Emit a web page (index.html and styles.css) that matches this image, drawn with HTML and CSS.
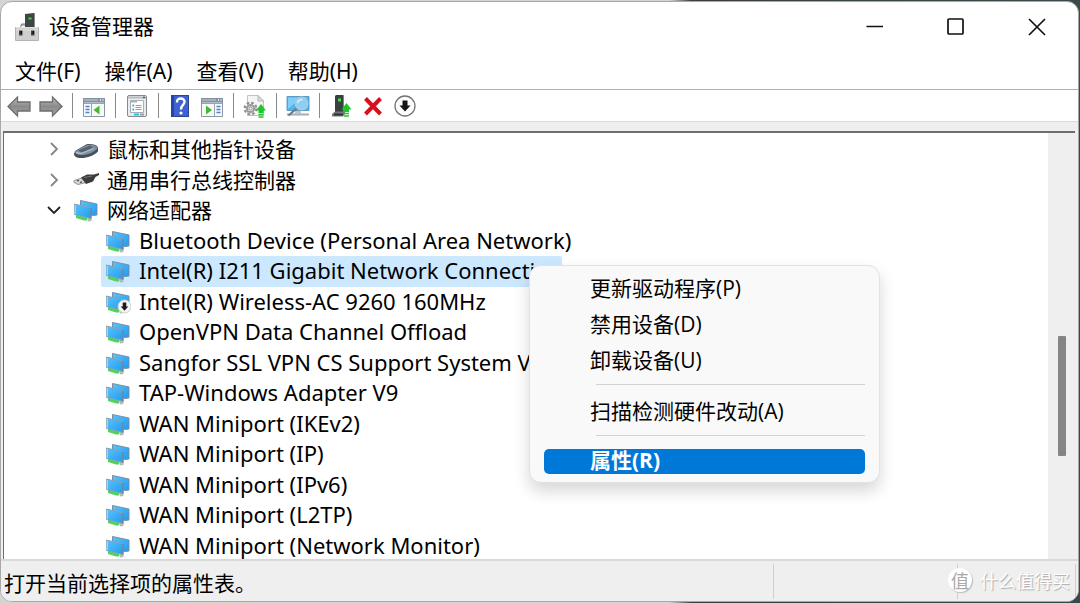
FILE: index.html
```html
<!DOCTYPE html>
<html lang="zh-CN">

  <head>
    <meta charset="utf-8">
    <title>设备管理器</title>
    <link rel="stylesheet" href="styles.css">
  </head>

  <body>

    <!-- shared icons -->
    <svg class="sprite" aria-hidden="true">
      <defs>
        <linearGradient id="screen" x1="0" y1="0" x2="1" y2="1">
          <stop offset="0" stop-color="#5cc3fb"/>
          <stop offset="1" stop-color="#1f9bf2"/>
        </linearGradient>
        <linearGradient id="steel" x1="0" y1="0" x2="0" y2="1">
          <stop offset="0" stop-color="#bdbdbd"/>
          <stop offset="0.5" stop-color="#8b8b8b"/>
          <stop offset="1" stop-color="#a5a5a5"/>
        </linearGradient>
      </defs>
      <symbol id="adapter" viewBox="0 0 26 24">
        <path d="M7.5 2.5 L24 6 V17 L20 17.5 L7.5 13Z" fill="url(#screen)" stroke="#7b8fa0"/>
        <path d="M3 16 L14 18.5 V22.5 L11 22.5 L3 20Z" fill="#4fd35c"/>
        <path d="M14 20 H18.5 V23 L15 23.5Z" fill="#b4b9bd"/>
        <path d="M1.5 6 L18 10 V20.5 L1.5 16.5Z" fill="url(#screen)" stroke="#8aa2b3"/>
        <path d="M2.2 7 V16" stroke="#b9e3f8"/>
        <path d="M18 10 V20.5" stroke="#66788a"/>
      </symbol>
      <symbol id="uparrow" viewBox="0 0 10 14">
        <path d="M5 0 L10 6.5 H7.5 V9 H2.5 V6.5 H0Z" fill="#22c32e"/>
        <path d="M2.5 10.5 H7.5 M2.5 13 H7.5" stroke="#22c32e" stroke-width="1.6"/>
      </symbol>
      <symbol id="chevron" viewBox="0 0 14 14">
        <path d="M4 1 L10 7 L4 13" fill="none" stroke="currentColor" stroke-width="1.8"/>
      </symbol>
    </svg>

    <div class="window">

      <header class="titlebar">
        <svg class="app-icon" viewBox="0 0 24 28" aria-hidden="true">
          <path d="M10 1 L19 0 L20 1 V14 H10Z" fill="#3f4446"/>
          <path d="M19 0 L20 1 V14 H19Z" fill="#85898b"/>
          <path d="M13.5 4.5 H16.5 V6.5 H13.5Z" fill="#35e04a"/>
          <path d="M6 12 H10 M5.5 14.5 L6.5 11 H10" fill="none" stroke="#777"/>
          <path d="M0.5 14.5 H23.5 V27.5 H0.5Z" fill="#cfcfcf" stroke="#b3b3b3"/>
          <path d="M1 14.5 H23 M1 17 H23" stroke="#e2e2e2"/>
          <path d="M4 17.5 H7.5 V22.5 H4Z M16 17.5 H19.5 V22.5 H16Z" fill="#454545"/>
          <path d="M5.5 18 H7 V21 H5.5Z M17.5 18 H19 V21 H17.5Z" fill="#111"/>
        </svg>
        <h1 class="title">设备管理器</h1>
        <div class="controls">
          <button class="control" aria-label="最小化">
            <svg viewBox="0 0 18 18"><path d="M0.5 8.5 H17"/></svg>
          </button>
          <button class="control" aria-label="最大化">
            <svg viewBox="0 0 18 18"><rect x="1" y="1" width="15" height="15" rx="1"/></svg>
          </button>
          <button class="control" aria-label="关闭">
            <svg viewBox="0 0 18 18"><path d="M1 1 L17 17 M17 1 L1 17"/></svg>
          </button>
        </div>
      </header>

      <nav class="menubar">
        <button>文件(F)</button>
        <button>操作(A)</button>
        <button>查看(V)</button>
        <button>帮助(H)</button>
      </nav>

      <div class="toolbar" role="toolbar">
        <button aria-label="后退">
          <svg viewBox="0 0 24 24"><path d="M1 12.5 L10.5 3 V8 H23 V17 H10.5 V22Z" fill="url(#steel)" stroke="#6d6d6d" stroke-width="1.3"/></svg>
        </button>
        <button aria-label="前进">
          <svg viewBox="0 0 24 24"><path d="M23 12.5 L13.5 3 V8 H1 V17 H13.5 V22Z" fill="url(#steel)" stroke="#6d6d6d" stroke-width="1.3"/></svg>
        </button>
        <span class="sep"></span>
        <button aria-label="显示控制台树">
          <svg viewBox="0 0 24 24">
            <path d="M1.5 4.5 H22.5 V22.5 H1.5Z" fill="#f7f8f9" stroke="#8b96a2"/>
            <path d="M1 4 H23 V10 H1Z" fill="#8592a1"/>
            <path d="M2 6 H16 M2 8.8 H22" stroke="#c5ced8"/>
            <path d="M18 6 H19 M20.5 6 H21.5" stroke="#fff" stroke-width="1.5"/>
            <path d="M9.5 10 V22" stroke="#9aa4ae"/>
            <path d="M3.5 12.5 H7.5 M3.5 15.5 H7.5 M3.5 18.5 H7.5" stroke="#4787c9" stroke-width="1.5"/>
            <path d="M17.5 11.5 V20.5 L11.5 16Z" fill="#43b832"/>
          </svg>
        </button>
        <span class="sep"></span>
        <button aria-label="属性">
          <svg viewBox="0 0 24 24">
            <rect x="2.5" y="1.5" width="19" height="21" rx="1.5" fill="#e9ebed" stroke="#858a8f"/>
            <path d="M3 3.5 H21" stroke="#b7bcc1" stroke-width="2"/>
            <path d="M18 3.5 H20" stroke="#555" stroke-width="1.5"/>
            <path d="M5.5 6.5 H18.5 V18.5 H5.5Z" fill="#fff" stroke="#a9afb6"/>
            <path d="M6 7.5 H12" stroke="#a9afb6" stroke-width="2"/>
            <path d="M7.5 11.5 H9 M7.5 15.5 H9" stroke="#28a4df" stroke-width="2"/>
            <path d="M10.5 11.5 H16.5 M10.5 13.5 H16.5 M10.5 15.5 H16.5" stroke="#969ca2"/>
            <path d="M9 20.5 H14" stroke="#28c4e6" stroke-width="2"/>
            <path d="M15 20.5 H19" stroke="#9aa0a6" stroke-width="2"/>
          </svg>
        </button>
        <span class="sep"></span>
        <button aria-label="帮助">
          <svg viewBox="0 0 24 24">
            <path d="M3 1 H21 V23 H3Z" fill="#3e62cf"/>
            <path d="M3 1 H6 V23 H3Z" fill="#2645a7"/>
            <path d="M3.5 1.5 H20.5 V22.5 H3.5Z" fill="none" stroke="#2c4496"/>
            <path d="M9 8.5 C8.5 3 17 3.5 16.5 8 C16.3 11 13 11 13 15.5" fill="none" stroke="#fff" stroke-width="2.4"/>
            <circle cx="13" cy="19" r="1.6" fill="#fff"/>
          </svg>
        </button>
        <button aria-label="显示操作窗格">
          <svg viewBox="0 0 24 24">
            <path d="M1.5 4.5 H22.5 V22.5 H1.5Z" fill="#f7f8f9" stroke="#8b96a2"/>
            <path d="M1 4 H23 V10 H1Z" fill="#8592a1"/>
            <path d="M2 6 H16 M2 8.8 H22" stroke="#c5ced8"/>
            <path d="M18 6 H19 M20.5 6 H21.5" stroke="#fff" stroke-width="1.5"/>
            <path d="M14.5 10 V22" stroke="#9aa4ae"/>
            <path d="M16.5 12.5 H20.5 M16.5 15.5 H20.5 M16.5 18.5 H20.5" stroke="#4787c9" stroke-width="1.5"/>
            <path d="M6 11.5 V20.5 L12 16Z" fill="#43b832"/>
          </svg>
        </button>
        <span class="sep"></span>
        <button aria-label="更新驱动程序">
          <svg viewBox="0 0 24 24">
            <path d="M4.5 1.5 H15 L20.5 7 V21.5 H4.5Z" fill="#f5f5f5" stroke="#c2c2c2"/>
            <path d="M15 1.5 V7 H20.5Z" fill="#ddd" stroke="#b5b5b5"/>
            <circle cx="7.5" cy="14.5" r="5.8" fill="none" stroke="#8f8f8f" stroke-width="2.2" stroke-dasharray="2.6 1.95"/>
            <circle cx="7.5" cy="14.5" r="3.6" fill="#e8e8e8" stroke="#9a9a9a" stroke-width="2"/>
            <circle cx="7.5" cy="14.5" r="1.5" fill="#fff" stroke="#888"/>
            <use href="#uparrow" x="12" y="10" width="12" height="14"/>
          </svg>
        </button>
        <span class="sep"></span>
        <button aria-label="扫描检测硬件改动">
          <svg viewBox="0 0 24 24">
            <path d="M1 2.5 H23 V16.5 H1Z" fill="#4fb5ee" stroke="#5c9dc6"/>
            <path d="M2 3.5 H22 L10 8 L2 15Z" fill="#7fcff6"/>
            <path d="M1 20.5 H23" stroke="#a1b0ba" stroke-width="2"/>
            <path d="M9 17 H15 V20 H9Z" fill="#b9c6ce"/>
            <path d="M11 14 L2.5 21.5" stroke="#6d7c86" stroke-width="2.2"/>
            <circle cx="15.5" cy="9.5" r="6" fill="#8bd0f4" stroke="#a9c9dc" stroke-width="1.8"/>
            <path d="M11.5 9 C12 6.5 14 5.5 16.5 5.5" fill="none" stroke="#d5f1ff" stroke-width="1.4"/>
          </svg>
        </button>
        <span class="sep"></span>
        <button aria-label="启用设备">
          <svg viewBox="0 0 24 24">
            <path d="M6 2 L7 1 H14 L15 2 V18 H6Z" fill="#3c3f40"/>
            <path d="M14 1.5 L15 2 V18 H14Z" fill="#808385"/>
            <path d="M3 20 L6 17.5 H16 V20 L14 22.5 H3Z" fill="#74787a"/>
            <path d="M5 20.5 H14" stroke="#303233" stroke-width="2"/>
            <path d="M9 4.5 H12 V7.5 H9Z" fill="#32e845"/>
            <use href="#uparrow" x="12" y="9" width="11" height="14"/>
          </svg>
        </button>
        <button aria-label="卸载设备">
          <svg viewBox="0 0 24 24"><path d="M4.5 4.5 L19.5 20 M19.5 4.5 L4.5 20" stroke="#d8101c" stroke-width="4"/></svg>
        </button>
        <button aria-label="禁用设备">
          <svg viewBox="0 0 24 24">
            <circle cx="12" cy="12" r="10" fill="#fcfcfc" stroke="#747474" stroke-width="1.3"/>
            <path d="M9.5 6.5 H14.5 V11.5 H17.5 L12 17.5 L6.5 11.5 H9.5Z" fill="#151515"/>
          </svg>
        </button>
      </div>

      <main class="pane">
        <ul class="tree">
          <li class="group">
            <svg class="chevron" aria-hidden="true"><use href="#chevron"/></svg>
            <svg class="icon" viewBox="0 0 26 24" aria-hidden="true">
              <path d="M1 17 L2 14 L13 7.5 C17 6.5 23 7 25 10.5 V14.5 C22 18.5 12 21.5 8 21 C4 21 1 19.5 1 17Z" fill="#46505b"/>
              <path d="M2 14.5 L12.5 8.5 C17 7 24 8 24.5 11.5 C21 15.5 13 18.5 8 18 C4 18 2 16.5 2 14.5Z" fill="#8090a1"/>
              <path d="M5 13.5 L17 8.5 L20 10.5 L9 15.5Z" fill="#56626f"/>
              <path d="M3 15.5 L8 16.5 L21 11.5" fill="none" stroke="#aebbc7" stroke-width="1.3"/>
            </svg>
            <span>鼠标和其他指针设备</span>
          </li>
          <li class="group">
            <svg class="chevron" aria-hidden="true"><use href="#chevron"/></svg>
            <svg class="icon" viewBox="0 0 26 24" aria-hidden="true">
              <path d="M1 12.5 L9 10 L13 14.5 L5 16.5 L1 14.5Z" fill="#d6d6d6" stroke="#969696"/>
              <path d="M4 13 L6 12.3 M7 14.5 L9 13.8" stroke="#444" stroke-width="1.3"/>
              <path d="M8 9.5 L14 6.5 L21 6.5 L26 5 V7 L22.5 9 L20 13.5 L13 16Z" fill="#3c3c3c"/>
              <path d="M11 9.5 L19 8" stroke="#777"/>
            </svg>
            <span>通用串行总线控制器</span>
          </li>
          <li class="group open">
            <svg class="chevron" aria-hidden="true"><use href="#chevron"/></svg>
            <svg class="icon" aria-hidden="true"><use href="#adapter"/></svg>
            <span>网络适配器</span>
          </li>
          <li class="device">
            <svg class="icon" aria-hidden="true"><use href="#adapter"/></svg>
            <span>Bluetooth Device (Personal Area Network)</span>
          </li>
          <li class="device selected">
            <svg class="icon" aria-hidden="true"><use href="#adapter"/></svg>
            <span>Intel(R) I211 Gigabit Network Connection</span>
            <div class="context-menu" role="menu">
              <button role="menuitem">更新驱动程序(P)</button>
              <button role="menuitem">禁用设备(D)</button>
              <button role="menuitem">卸载设备(U)</button>
              <hr>
              <button role="menuitem">扫描检测硬件改动(A)</button>
              <hr>
              <button role="menuitem" class="active">属性(R)</button>
            </div>
          </li>
          <li class="device">
            <svg class="icon" viewBox="0 0 26 24" aria-hidden="true">
              <use href="#adapter" width="26" height="24"/>
              <circle cx="19.5" cy="16.5" r="6.5" fill="#f6f6f6" stroke="#cfcfcf"/>
              <path d="M17.7 12.5 H21.3 V16.5 H23.3 L19.5 20.8 L15.7 16.5 H17.7Z" fill="#1c1c1c"/>
            </svg>
            <span>Intel(R) Wireless-AC 9260 160MHz</span>
          </li>
          <li class="device">
            <svg class="icon" aria-hidden="true"><use href="#adapter"/></svg>
            <span>OpenVPN Data Channel Offload</span>
          </li>
          <li class="device">
            <svg class="icon" aria-hidden="true"><use href="#adapter"/></svg>
            <span>Sangfor SSL VPN CS Support System V</span>
          </li>
          <li class="device">
            <svg class="icon" aria-hidden="true"><use href="#adapter"/></svg>
            <span>TAP-Windows Adapter V9</span>
          </li>
          <li class="device">
            <svg class="icon" aria-hidden="true"><use href="#adapter"/></svg>
            <span>WAN Miniport (IKEv2)</span>
          </li>
          <li class="device">
            <svg class="icon" aria-hidden="true"><use href="#adapter"/></svg>
            <span>WAN Miniport (IP)</span>
          </li>
          <li class="device">
            <svg class="icon" aria-hidden="true"><use href="#adapter"/></svg>
            <span>WAN Miniport (IPv6)</span>
          </li>
          <li class="device">
            <svg class="icon" aria-hidden="true"><use href="#adapter"/></svg>
            <span>WAN Miniport (L2TP)</span>
          </li>
          <li class="device">
            <svg class="icon" aria-hidden="true"><use href="#adapter"/></svg>
            <span>WAN Miniport (Network Monitor)</span>
          </li>
        </ul>
        <div class="scrollbar"><div class="thumb"></div></div>
      </main>

      <footer class="statusbar">
        <p class="status">打开当前选择项的属性表。</p>
        <span class="cell"></span>
        <span class="cell last"></span>
        <div class="watermark"><span class="mark">值</span><span>什么值得买</span></div>
      </footer>

    </div>
  </body>
</html>
```

FILE: styles.css
```css
* {
  box-sizing: border-box;
}

body {
  height: 100vh;
  margin: 0;
  padding: 1px 1px 1px 0;
  background: linear-gradient(to right, #d4d4d4 62%, #3a3f42 64%, #3a4a4c);
  color: #000;
  font-family: "Noto Sans", "Noto Sans CJK SC", sans-serif;
  font-size: 21px;
  line-height: 30px;
}

button {
  margin: 0;
  padding: 0;
  border: 0;
  background: none;
  color: inherit;
  font: inherit;
}

svg {
  display: block;
  flex: none;
}

.sprite {
  position: absolute;
  width: 0;
  height: 0;
}

.window {
  display: flex;
  flex-direction: column;
  height: 100%;
  border: 1px solid #a8a8a8;
  border-radius: 12px;
  background: #fff;
  overflow: hidden;
}

/* title bar */

.titlebar {
  display: flex;
  align-items: center;
  height: 49px;
  padding-left: 14px;
}

.app-icon {
  width: 24px;
  height: 28px;
}

.title {
  flex: 1;
  margin: 0 0 3px 10px;
  font-size: 21px;
  font-weight: 400;
  font-family: "Noto Sans CJK SC", sans-serif;
}

.controls {
  display: flex;
  padding-right: 1px;
}

.control {
  display: flex;
  justify-content: center;
  align-items: center;
  width: 81px;
  height: 49px;
}

.control svg {
  width: 18px;
  height: 18px;
  fill: none;
  stroke: #111;
  stroke-width: 1.7;
}

/* menu bar */

.menubar {
  display: flex;
  gap: 24px;
  height: 39px;
  padding: 5px 14px 0;
  border-bottom: 1px solid #b0b0b0;
}

.menubar button {
  height: 30px;
}

/* toolbar */

.toolbar {
  display: flex;
  align-items: center;
  height: 32px;
  padding-left: 2px;
  border-bottom: 1px solid #dadada;
}

.toolbar button {
  display: flex;
  justify-content: center;
  width: 32px;
}

.toolbar svg {
  width: 24px;
  height: 24px;
}

.sep {
  width: 1px;
  height: 25px;
  margin: 0 5px;
  background: #8a8a8a;
}

/* device tree */

.pane {
  display: flex;
  flex: 1;
  min-height: 0;
  border: solid #efefef;
  border-width: 9px 3px 0 2px;
  background: #fff;
}

.tree {
  display: flex;
  flex: 1;
  flex-direction: column;
  align-items: flex-start;
  margin: 0 0 -2px;
  padding: 1px 0 0;
  border-top: 2px solid #6e6e6e;
  border-left: 1px solid #6e6e6e;
  list-style: none;
}

.group,
.device {
  display: flex;
  flex: 1;
  align-items: center;
  padding: 0 4px;
  white-space: nowrap;
}

.group {
  gap: 8px;
  margin-left: 39px;
}

.device {
  position: relative;
  gap: 8px;
  margin-left: 97px;
  padding-right: 0;
  font-size: 22px;
  line-height: 28px;
}

.device span {
  padding-bottom: 2px;
}

.selected {
  border-radius: 2px;
  background: #cce8ff;
}

.icon {
  width: 26px;
  height: 24px;
}

.chevron {
  width: 14px;
  height: 14px;
  margin-right: 4px;
  color: #858585;
}

.open .chevron {
  color: #222;
  transform: rotate(90deg);
}

.scrollbar {
  width: 27px;
  padding: 203px 9px 0 10px;
  border-top: 2px solid #6e6e6e;
  background: #efefef;
}

.thumb {
  height: 120px;
  border-radius: 1px;
  background: #858585;
}

/* context menu */

.context-menu {
  position: absolute;
  z-index: 1;
  top: 9px;
  left: 428px;
  width: 351px;
  padding: 4px 14px 8px;
  border: 1px solid #e2e2e2;
  border-radius: 12px;
  background: #f9f9f9;
  box-shadow: 0 8px 16px rgba(0, 0, 0, 0.16);
  font-family: "Open Sans", "Noto Sans CJK SC", sans-serif;
  font-size: 21px;
}

.context-menu button {
  display: block;
  width: 100%;
  height: 36px;
  padding-left: 46px;
  text-align: left;
}

.context-menu hr {
  height: 1px;
  margin: 6px 0 8px 52px;
  border: 0;
  background: #d2d2d2;
}

.context-menu .active {
  height: 25px;
  margin-top: 13px;
  padding-bottom: 2px;
  border-radius: 5px;
  background: #0078d7;
  color: #fff;
  font-weight: 700;
  line-height: 23px;
}

/* status bar */

.statusbar {
  display: flex;
  position: relative;
  height: 42px;
  padding: 3px 2px 2px 3px;
  border-top: 2px solid #d9d9d9;
  background: #efefef;
  font-family: "Noto Sans CJK SC", sans-serif;
}

.status {
  flex: 1;
  margin: 0;
  line-height: 36px;
}

.cell {
  width: 184px;
  border-left: 1px solid #cfcfcf;
}

.last {
  width: 119px;
  border-right: 1px solid #cfcfcf;
}

.watermark {
  display: flex;
  position: absolute;
  right: 8px;
  bottom: 9px;
  align-items: center;
  gap: 8px;
  color: #fff;
  font-size: 18px;
  line-height: 24px;
  text-shadow: 1px 1px 1px #aaa;
}

.mark {
  width: 24px;
  border-radius: 50%;
  background: #fff;
  box-shadow: 1px 1px 1px #bbb;
  color: #aaa;
  text-align: center;
  text-shadow: none;
}
```
